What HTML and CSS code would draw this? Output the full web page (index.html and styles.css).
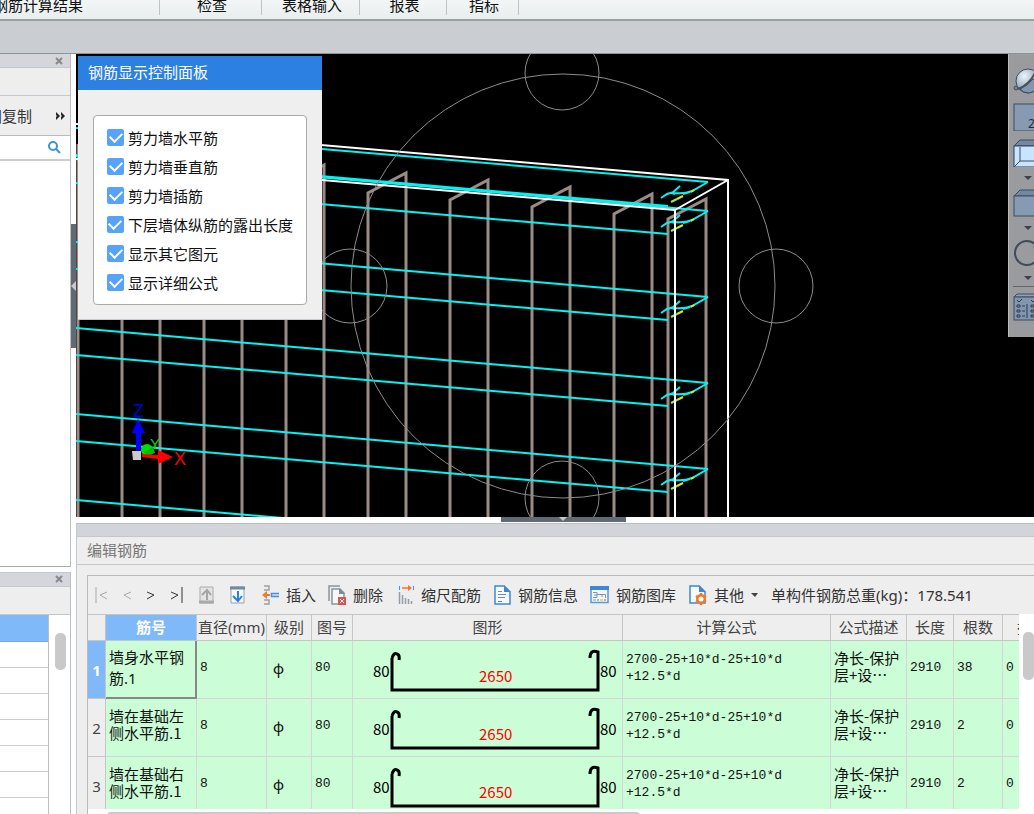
FILE: index.html
```html
<!DOCTYPE html>
<html lang="zh-CN">
<head>
    <meta charset="UTF-8">
    <meta name="viewport" content="width=device-width, initial-scale=1.0">
    <title>编辑钢筋</title>
    <link rel="stylesheet" href="styles.css">
</head>
<body>

<nav class="ribbon">
    <button class="tab tab-first">钢筋计算结果</button>
    <button class="tab tab-check">检查</button>
    <button class="tab tab-input">表格输入</button>
    <button class="tab tab-report">报表</button>
    <button class="tab tab-index">指标</button>
</nav>
<div class="strip"></div>

<main class="workspace">
    <aside class="sidebar">
        <section class="dock dock-top">
            <div class="dock-title"><button class="close" aria-label="关闭"><svg width="8" height="8"><path d="M1 1L7 7M7 1L1 7"/></svg></button></div>
            <div class="dock-blank"></div>
            <div class="dock-tools">
                <button class="copy">间复制</button>
                <button class="more" aria-label="更多"><svg width="10" height="8"><path d="M0 0L4 4L0 8V5L1 4L0 3ZM5 0L9 4L5 8V5L6 4L5 3Z"/></svg></button>
            </div>
            <div class="search">
                <input type="text" aria-label="搜索">
                <svg width="13" height="13" viewBox="0 0 13 13"><circle cx="5" cy="5" r="4"/><path d="M8 8L12 12"/></svg>
            </div>
            <div class="dock-body"></div>
        </section>
        <section class="dock dock-bottom">
            <div class="dock-title"><button class="close" aria-label="关闭"><svg width="8" height="8"><path d="M1 1L7 7M7 1L1 7"/></svg></button></div>
            <div class="dock-blank"></div>
            <div class="list-wrap">
                <div class="list">
                    <div class="item active"></div>
                    <div class="item"></div>
                    <div class="item"></div>
                    <div class="item"></div>
                    <div class="item"></div>
                    <div class="item"></div>
                    <div class="item"></div>
                    <div class="item"></div>
                </div>
                <div class="list-scroll"><div class="thumb"></div></div>
            </div>
        </section>
    </aside>

    <div class="splitter-v"><div class="handle"><svg width="5" height="10"><path d="M5 0L0 5L5 10Z"/></svg></div></div>

    <div class="content">
        <section class="viewport">
            <svg class="scene" viewBox="76 54 958 463" preserveAspectRatio="xMinYMin slice">
                <defs>
                    <g id="hook">
                        <path class="bar" d="M708 0L692 9Q685 12 674 11M683 12L690 10M680 4L672 11L675 12M661 16L667 12L674 10"/>
                        <path class="tip" d="M671 20L677 17"/>
                        <path class="dot" d="M677 17L683 14M691 10L694 8"/>
                    </g>
                </defs>
                <!-- vertical bars -->
                <g class="vertical">
                    <path d="M78 144V517M122 517V172L160 151V517M204 517V179L242 158V517M286 517V186L324 165V517"/>
                    <path d="M368 517V193L406 173V517M450 517V200L488 180V517M532 517V207L570 187V517M614 517V214L652 194V517M668 517V219L706 199V517"/>
                </g>
                <!-- horizontal bars -->
                <g class="bar">
                    <path d="M76 128L708 182M76 155L668 206"/>
                    <path d="M76 156L708 211M76 183L668 234"/>
                    <path d="M76 242L708 297M76 269L668 320"/>
                    <path d="M76 328L708 383M76 355L668 406"/>
                    <path d="M76 414L708 469M76 441L668 492"/>
                    <path d="M76 500L708 555"/>
                </g>
                <use href="#hook" y="182"/>
                <use href="#hook" y="211"/>
                <use href="#hook" y="297"/>
                <use href="#hook" y="383"/>
                <use href="#hook" y="469"/>
                <path class="wall" d="M76 124L728 180V517M76 159L675 210V517M675 210L728 180"/>
                <g class="orbit">
                    <circle cx="563" cy="286" r="212"/>
                    <circle cx="562" cy="73" r="37"/>
                    <circle cx="776" cy="286" r="37"/>
                    <circle cx="350" cy="286" r="37"/>
                    <circle cx="562" cy="498" r="37"/>
                </g>
                <!-- axes -->
                <circle cx="147" cy="450" r="6" fill="#0d0"/>
                <path d="M144 452L153 447L155 453L148 456Z" fill="#0b0"/>
                <path d="M136 452V433H132L138 419L145 433H141V452Z" fill="#00f"/>
                <path d="M142 454L158 455V450L173 457L158 464V459L142 457Z" fill="#f00"/>
                <path d="M132 451H141V460H133Z" fill="#ccc"/>
                <text class="axis" x="133" y="417" fill="#00d">Z</text>
                <text class="axis axis-y" x="150" y="449" fill="#0d0">Y</text>
                <text class="axis" x="174" y="465" fill="#f00">X</text>
            </svg>

            <form class="panel">
                <h2>钢筋显示控制面板</h2>
                <div class="options">
                    <label><input type="checkbox" checked>剪力墙水平筋</label>
                    <label><input type="checkbox" checked>剪力墙垂直筋</label>
                    <label><input type="checkbox" checked>剪力墙插筋</label>
                    <label><input type="checkbox" checked>下层墙体纵筋的露出长度</label>
                    <label><input type="checkbox" checked>显示其它图元</label>
                    <label><input type="checkbox" checked>显示详细公式</label>
                </div>
            </form>

            <div class="view-tools">
                <button aria-label="动态观察"><svg width="28" height="28" viewBox="0 0 28 28">
                    <defs><radialGradient id="ball" cx="0.35" cy="0.3" r="0.7"><stop offset="0" stop-color="#eef3f8"/><stop offset="1" stop-color="#7d92ac"/></radialGradient></defs>
                    <circle cx="15" cy="14" r="12" fill="url(#ball)" stroke="#3d4c5c"/>
                    <path d="M7 22Q16 18 20 12L27 14Q26 24 16 26Q10 26 7 22Z" fill="#8096b1" stroke="#3d4c5c"/>
                    <circle cx="3" cy="21" r="2" fill="#808489" stroke="#4b5158"/><path d="M5 22Q16 18 22 6" fill="none" stroke="#4b5158" stroke-width="2"/>
                </svg></button>
                <button aria-label="二维"><svg width="28" height="28" viewBox="0 0 28 28">
                    <rect x="1" y="1" width="30" height="27" fill="#869ab3" stroke="#3d4c5c"/>
                    <text x="15" y="25">2D</text>
                </svg></button>
                <button aria-label="视图"><svg width="28" height="28" viewBox="0 0 28 28">
                    <path d="M1 7L7 1H34V7Z" fill="#7488a2" stroke="#3d4c5c"/>
                    <rect x="1" y="7" width="32" height="21" fill="#c8e5ff" stroke="#2f4052"/>
                    <path d="M1 28L7 22H30M7 22V8" fill="none" stroke="#3d4c5c"/>
                </svg></button>
                <svg class="drop" width="8" height="6"><path d="M0 1H8L4 5Z"/></svg>
                <button aria-label="实体"><svg width="28" height="28" viewBox="0 0 28 28">
                    <path d="M1 7L7 1H34V7Z" fill="#7488a2" stroke="#3d4c5c"/>
                    <rect x="1" y="7" width="32" height="20" fill="#869ab3" stroke="#3d4c5c"/>
                </svg></button>
                <svg class="drop" width="8" height="6"><path d="M0 1H8L4 5Z"/></svg>
                <button aria-label="旋转"><svg width="28" height="28" viewBox="0 0 28 28">
                    <circle cx="14" cy="14" r="12" fill="none" stroke="#3f4a58" stroke-width="2"/>
                    <path d="M20 8L27 9V2Z" fill="#3f4a58"/>
                </svg></button>
                <svg class="drop" width="8" height="6"><path d="M0 1H8L4 5Z"/></svg>
                <button class="settings" aria-label="显示设置"><svg width="28" height="28" viewBox="0 0 28 28">
                    <path d="M1 4L4 1H32V4Z" fill="#8da1ba" stroke="#3d4c5c"/>
                    <rect x="1" y="4" width="31" height="23" fill="#8096b1" stroke="#3d4c5c"/>
                    <path d="M4 7L6 9L9 6M18 7L20 9L23 6M4 12H7V14H4ZM4 17H7V19H4ZM4 22H7V24H4ZM9 13H12M9 18H12M9 23H12M14 11V25M18 12H21V14H18ZM18 17H21V19H18ZM18 22H21V24H18Z" fill="none" stroke="#2f3c4a"/>
                </svg></button>
            </div>
        </section>

        <div class="splitter-h"><div class="handle"><svg width="8" height="4"><path d="M0 0H8L4 4Z"/></svg></div></div>

        <section class="editor">
            <div class="editor-grip"></div>
            <h1>编辑钢筋</h1>
            <div class="grid-box">
                <div class="toolbar">
                    <div class="pager">
                        <button class="off" aria-label="首行"><svg width="12" height="16"><path d="M1 0V16M12 5L5 8L12 12"/></svg></button>
                        <button class="off" aria-label="上一行"><svg width="8" height="16"><path d="M8 5L1 8L8 12"/></svg></button>
                        <button aria-label="下一行"><svg width="8" height="16"><path d="M0 5L7 8L0 12"/></svg></button>
                        <button aria-label="末行"><svg width="12" height="16"><path d="M0 5L7 8L0 12M11 0V16"/></svg></button>
                        <button aria-label="上移"><svg width="15" height="18"><path d="M1 1H14V17H1Z" fill="#e4e4e4" stroke="#aaa"/><path d="M0 16H15" stroke="#aaa" stroke-width="3"/><path d="M8 14V5M3 9L8 4L12 9" stroke="#a5a5a5" stroke-width="2"/></svg></button>
                        <button aria-label="下移"><svg width="15" height="18"><path d="M1 1H14V17H1Z" fill="#f4f8fc" stroke="#8fa3b8"/><path d="M0 2H15" stroke="#6f8aa5" stroke-width="3"/><path d="M8 5V14M3 10L8 15L12 10" stroke="#2f7fd8" stroke-width="2"/></svg></button>
                    </div>
                    <button class="tool">
                        <svg width="17" height="20"><path d="M2 1H7V5H2M2 19H7V15H2" stroke="#98a2ab" stroke-width="1.5"/><path d="M17 8.500H9.500V11.500H17" fill="#cfe2fa" stroke="#4a90e2" stroke-width="1.500"/><path d="M2 10H8" stroke="#f0792b" stroke-width="2"/><path d="M0 10L5 6V14Z" fill="#f0792b"/></svg>
                        插入
                    </button>
                    <button class="tool">
                        <svg width="18" height="20"><path d="M1 16V1H12" stroke="#8a949c" stroke-width="1.500"/><path d="M4 4H12L16 8V19H4Z" fill="#f8f8f8" stroke="#8a949c" stroke-width="1.500"/><path d="M11 3V9H17Z" fill="#7f8a92"/><rect x="10" y="12" width="8" height="8" fill="#dd5252"/><path d="M12 14L16 18M16 14L12 18" stroke="#fff"/></svg>
                        删除
                    </button>
                    <button class="tool">
                        <svg width="19" height="20"><path d="M4.500 1V5M18.500 1V5" stroke="#4a90e2"/><path d="M7 3H15" stroke="#f0792b" stroke-width="1.500"/><path d="M13 0L17 3L13 6Z" fill="#f0792b"/><path d="M4.500 7V19M7.500 10V19M10.500 13V19M13.500 14V19M16.500 16V19" stroke="#929da6" stroke-width="1.500"/></svg>
                        缩尺配筋
                    </button>
                    <button class="tool">
                        <svg width="18" height="20"><path d="M2 1H11L17 7V19H2Z" fill="#f5faff" stroke="#3f87d6" stroke-width="1.500"/><path d="M11 0V7H18Z" fill="#3f87d6"/><path d="M5 6.500H9M5 9.500H13M5 12.500H12" stroke="#7f8a92"/><path d="M5 16.500H9" stroke="#3f87d6"/></svg>
                        钢筋信息
                    </button>
                    <button class="tool">
                        <svg width="19" height="18"><path d="M1 1H18V16.500H1Z" fill="#f1f6fc" stroke="#5b98dc" stroke-width="1.500"/><path d="M0 2H19" stroke="#3f87d6" stroke-width="4"/><path d="M3 6.500H7V11.500H3M4 9H7M7 8.500H15.500V12M12 8.500V11" stroke="#8c959d"/><path d="M3 14H6" stroke="#8fc3f5" stroke-width="1.500"/><path d="M7 14H9" stroke="#7c7" stroke-width="1.500"/><path d="M10 14H13" stroke="#e8c45a" stroke-width="1.500"/><path d="M14 14H16" stroke="#e77" stroke-width="1.500"/></svg>
                        钢筋图库
                    </button>
                    <button class="tool">
                        <svg width="19" height="20"><path d="M2 1H11L17 7V18H2Z" fill="#f5faff" stroke="#3f87d6" stroke-width="1.500"/><path d="M11 0V7H18Z" fill="#3f87d6"/><circle cx="13" cy="14" r="5" fill="#f0792b"/><path d="M13 8V20M8 11L18 17M18 11L8 17" stroke="#f0792b" stroke-width="2.500"/><circle cx="13" cy="14" r="2.500" fill="#fff"/></svg>
                        其他
                        <svg class="caret" width="8" height="4"><path d="M0 0H7L4 4Z"/></svg>
                    </button>
                    <span class="total">单构件钢筋总重(kg)：178.541</span>
                </div>

                <div class="table-area">
                    <div class="table-clip">
                        <table>
                            <colgroup>
                                <col class="c-row"><col class="c-name"><col class="c-dia"><col class="c-grade"><col class="c-no"><col>
                                <col class="c-formula"><col class="c-desc"><col class="c-len"><col class="c-count"><col class="c-lap">
                            </colgroup>
                            <thead>
                                <tr>
                                    <th></th>
                                    <th class="active">筋号</th>
                                    <th>直径(mm)</th>
                                    <th>级别</th>
                                    <th>图号</th>
                                    <th>图形</th>
                                    <th>计算公式</th>
                                    <th>公式描述</th>
                                    <th>长度</th>
                                    <th>根数</th>
                                    <th class="cut">搭接</th>
                                </tr>
                            </thead>
                            <tbody>
                                <tr>
                                    <th class="active">1</th>
                                    <td class="editing">墙身水平钢筋.1</td>
                                    <td class="num">8</td>
                                    <td class="grade">ф</td>
                                    <td class="num">80</td>
                                    <td class="shape"><svg width="269" height="56"><path d="M39 16V48H245V10Q237 7 237 16M39 16Q41 10 44 12Q47 13 46 18"/><text x="20" y="35">80</text><text class="red" x="126" y="40">2650</text><text x="247" y="35">80</text></svg></td>
                                    <td class="num">2700-25+10*d-25+10*d +12.5*d</td>
                                    <td class="desc">净长-保护层+设⋯</td>
                                    <td class="num">2910</td>
                                    <td class="num">38</td>
                                    <td class="num">0</td>
                                </tr>
                                <tr>
                                    <th>2</th>
                                    <td class="name">墙在基础左侧水平筋.1</td>
                                    <td class="num">8</td>
                                    <td class="grade">ф</td>
                                    <td class="num">80</td>
                                    <td class="shape"><svg width="269" height="56"><path d="M39 16V48H245V10Q237 7 237 16M39 16Q41 10 44 12Q47 13 46 18"/><text x="20" y="35">80</text><text class="red" x="126" y="40">2650</text><text x="247" y="35">80</text></svg></td>
                                    <td class="num">2700-25+10*d-25+10*d +12.5*d</td>
                                    <td class="desc">净长-保护层+设⋯</td>
                                    <td class="num">2910</td>
                                    <td class="num">2</td>
                                    <td class="num">0</td>
                                </tr>
                                <tr>
                                    <th>3</th>
                                    <td class="name">墙在基础右侧水平筋.1</td>
                                    <td class="num">8</td>
                                    <td class="grade">ф</td>
                                    <td class="num">80</td>
                                    <td class="shape"><svg width="269" height="56"><path d="M39 16V48H245V10Q237 7 237 16M39 16Q41 10 44 12Q47 13 46 18"/><text x="20" y="35">80</text><text class="red" x="126" y="40">2650</text><text x="247" y="35">80</text></svg></td>
                                    <td class="num">2700-25+10*d-25+10*d +12.5*d</td>
                                    <td class="desc">净长-保护层+设⋯</td>
                                    <td class="num">2910</td>
                                    <td class="num">2</td>
                                    <td class="num">0</td>
                                </tr>
                            </tbody>
                        </table>
                    </div>
                    <div class="table-scroll"><div class="thumb"></div></div>
                </div>
                <div class="bottom-scroll"><div class="thumb"></div></div>
            </div>
        </section>
    </div>
</main>

</body>
</html>
```
FILE: styles.css
```css
* {
    box-sizing: border-box;
}

body {
    margin: 0;
    height: 100vh;
    display: flex;
    flex-direction: column;
    overflow: hidden;
    font-family: "Noto Sans", "Noto Sans CJK SC", sans-serif;
    font-size: 15px;
    color: #333;
    background: #fff;
}

button {
    padding: 0;
    border: none;
    background: none;
    font: inherit;
    color: inherit;
}

svg {
    display: block;
    flex: none;
}

/* top tabs */
.ribbon {
    flex: none;
    height: 21px;
    display: flex;
    align-items: flex-end;
    overflow: hidden;
    background: linear-gradient(#f2f6f6, #e8eded);
    border-bottom: 2px solid #9a9fa3;
    padding-bottom: 4px;
}

.tab {
    display: flex;
    justify-content: center;
    flex: none;
    height: 24px;
    padding-left: 3px;
    line-height: 28px;
    white-space: nowrap;
    color: #111;
    border-right: 1px solid #bfc3c6;
    width: 98px;
}

.tab-first {
    width: 160px;
    justify-content: flex-end;
    padding-right: 76px;
}

.tab-check {
    width: 102px;
}

.tab-report {
    width: 87px;
}

.tab-index {
    width: 72px;
}

.strip {
    flex: none;
    height: 33px;
    background: #cacdd1;
    border-bottom: 1px solid #8d949c;
}

.workspace {
    flex: 1;
    min-height: 0;
    display: grid;
    grid-template-columns: 71px 5px 1fr;
}

/* left docks */
.sidebar {
    display: flex;
    flex-direction: column;
    gap: 5px;
    min-height: 0;
}

.dock {
    display: flex;
    flex-direction: column;
    border-right: 1px solid #bbbfc4;
    min-height: 0;
}

.dock-top {
    flex: 513;
    border-bottom: 1px solid #aaa;
}

.dock-bottom {
    flex: 242;
    border-top: 1px solid #c3c8ce;
}

.dock-title {
    height: 14px;
    display: flex;
    justify-content: flex-end;
    align-items: center;
    padding-right: 7px;
    background: #d5d6db;
    border-bottom: 1px solid #c3c8ce;
    flex: none;
}

.close svg {
    stroke: #888;
    stroke-width: 2;
}

.dock-blank {
    flex: none;
    height: 28px;
    background: #eee;
    border-bottom: 1px solid #c3c8ce;
}

.dock-tools {
    flex: none;
    height: 40px;
    display: flex;
    align-items: center;
    justify-content: flex-end;
    gap: 24px;
    padding-right: 4px;
    overflow: hidden;
    background: #eee;
    border-bottom: 1px solid #bbb;
}

.copy {
    flex: none;
}

.more svg {
    fill: #222;
}

.search {
    flex: none;
    height: 25px;
    display: flex;
    align-items: center;
    padding-right: 9px;
    border-bottom: 2px solid #ccc;
}

.search input {
    flex: 1;
    min-width: 0;
    border: none;
    outline: none;
    font: inherit;
}

.search svg {
    fill: none;
    stroke: #3c95d0;
    stroke-width: 2;
}

.dock-body {
    flex: 1;
}

.list-wrap {
    flex: 1;
    min-height: 0;
    display: flex;
    overflow: hidden;
}

.list {
    flex: 1;
    border-right: 1px solid #bbb;
}

.item {
    height: 26px;
    border-bottom: 1px solid #ccc;
}

.item.active {
    height: 27px;
    background: #7fb9fa;
    border-color: #6fa8e8;
}

.list-scroll {
    width: 21px;
    padding: 18px 4px 0 6px;
}

.list-scroll .thumb {
    height: 37px;
    border-radius: 5px;
    background: #c9c9c9;
}

/* splitters */
.splitter-v {
    padding-top: 170px;
}

.splitter-v .handle {
    height: 124px;
    display: flex;
    align-items: center;
    background: #606a75;
}

.splitter-h {
    flex: none;
    height: 6px;
    padding-left: 16px;
}

.splitter-h .handle {
    width: 125px;
    height: 5px;
    margin: 0 auto;
    display: flex;
    justify-content: center;
    background: #606a75;
}

.handle svg {
    fill: #c5c8cc;
}

.content {
    display: flex;
    flex-direction: column;
    min-width: 0;
    min-height: 0;
}

/* 3D view */
.viewport {
    flex: 1;
    min-height: 0;
    position: relative;
    overflow: hidden;
    background: #000;
}

.scene {
    width: 100%;
    height: 100%;
    fill: none;
}

.bar {
    stroke: #00f4f4;
    stroke-width: 2;
}

.tip {
    stroke: #90f060;
    stroke-width: 2;
}

.dot {
    stroke: #dde810;
    stroke-width: 2;
}

.vertical {
    stroke: #9b8b85;
    stroke-width: 3;
}

.wall {
    stroke: #fff;
    stroke-width: 2;
}

.orbit {
    stroke: #8c8c8c;
    stroke-width: 1;
}

.axis {
    font: 18px "Liberation Sans", sans-serif;
}

.axis-y {
    font-size: 15px;
}

.panel {
    position: absolute;
    left: 2px;
    top: 2px;
    width: 244px;
    padding-bottom: 14px;
    background: #efefef;
    border-bottom: 1px solid #c8ccd2;
}

.panel h2 {
    margin: 0 0 26px;
    padding-left: 10px;
    line-height: 33px;
    font-size: 15px;
    font-weight: normal;
    color: #fff;
    background: #2b80e2;
    border-bottom: 1px solid #2b80e2;
    margin-bottom: 25px;
}

.options {
    margin: 0 15px;
    padding: 7px 13px;
    display: flex;
    flex-direction: column;
    background: #fff;
    border: 1px solid #aaa;
    border-radius: 4px;
}

.options label {
    height: 29px;
    display: flex;
    align-items: center;
    gap: 4px;
    line-height: 20px;
    color: #111;
    white-space: nowrap;
}

.options input {
    appearance: none;
    width: 17px;
    height: 17px;
    margin: 0;
    display: flex;
    justify-content: center;
    align-items: center;
    border-radius: 2px;
    background: #57a3fa;
}

.options input:checked::after {
    content: "";
    width: 10px;
    height: 6px;
    margin-bottom: 3px;
    border-left: 2px solid #fff;
    border-bottom: 2px solid #fff;
    transform: rotate(-45deg);
}

.view-tools {
    position: absolute;
    top: 0;
    right: 0;
    width: 26px;
    height: 283px;
    padding: 13px 0 0 4px;
    display: flex;
    flex-direction: column;
    gap: 8px;
    overflow: hidden;
    background: #999b9f;
    border-left: 1px solid #bbb;
}

.view-tools button {
    width: 28px;
}

.view-tools text {
    font: 12px "Noto Sans", sans-serif;
    fill: #1f2c3a;
}

.drop {
    margin-left: 11px;
    fill: #39434f;
}

.view-tools .settings {
    margin-top: -3px;
    padding-top: 6px;
    border-top: 1px solid #666;
}

/* bar editor */
.editor {
    flex: none;
    display: flex;
    flex-direction: column;
    background: #eee;
    border-left: 1px solid #c3c8ce;
}

.editor-grip {
    height: 14px;
    background: #d3d4d9;
    border-top: 1px solid #b9bec4;
    border-bottom: 1px solid #c3c8ce;
}

.editor h1 {
    margin: 0 0 10px;
    padding-left: 10px;
    line-height: 27px;
    font-size: 15px;
    font-weight: normal;
    color: #777;
    border-bottom: 1px solid #c3c8ce;
}

.grid-box {
    margin-left: 10px;
    border-left: 1px solid #bbb;
    border-top: 1px solid #bbb;
}

.toolbar {
    height: 38px;
    display: flex;
    align-items: center;
    gap: 12px;
    padding-left: 7px;
    padding-bottom: 1px;
    white-space: nowrap;
    overflow: hidden;
}

.toolbar svg {
    fill: none;
}

.pager {
    display: flex;
    align-items: center;
    gap: 16px;
    margin-right: 5px;
}

.pager svg {
    stroke: #333;
}

.pager .off svg {
    stroke: #aaa;
}

.tool {
    display: flex;
    align-items: center;
    gap: 7px;
}

.toolbar .caret {
    fill: #444;
}

.table-area {
    display: flex;
    height: 195px;
    background: #fff;
}

.table-clip {
    flex: 1;
    min-width: 0;
    overflow: hidden;
}

table {
    width: 100%;
    table-layout: fixed;
    border-collapse: separate;
    border-spacing: 0;
}

.c-row { width: 18px; }
.c-name { width: 91px; }
.c-dia { width: 70px; }
.c-grade { width: 45px; }
.c-no { width: 41px; }
.c-formula { width: 208px; }
.c-desc { width: 76px; }
.c-len { width: 47px; }
.c-count { width: 49px; }
.c-lap { width: 16px; }

th {
    padding: 0;
    font-weight: normal;
    line-height: 20px;
    white-space: nowrap;
    background: #eee;
    border-right: 1px solid #c5c5c5;
    border-bottom: 1px solid #c5c5c5;
    color: #444;
}

thead th {
    height: 27px;
    padding-bottom: 1px;
    border-top: 1px solid #c5c5c5;
}

th.active {
    color: #fff;
    font-weight: bold;
    background: #7fb9fa;
}

th.cut {
    overflow: hidden;
    border-right: none;
    padding-left: 14px;
    text-align: left;
}

td {
    height: 58px;
    padding: 0 0 4px 3px;
    overflow: hidden;
    background: #cbfed6;
    border-right: 1px solid #d5d5d5;
    border-bottom: 1px solid #d5d5d5;
    color: #111;
    line-height: 17px;
}

td:last-child {
    border-right: none;
}

.num {
    font-family: "Liberation Mono", monospace;
    font-size: 13px;
}

/* only the space may wrap */
td.num {
    padding-right: 40px;
    word-break: keep-all;
}

td.num:not(:nth-child(7)) {
    padding-right: 0;
}

.name,
.desc {
    font-family: "Noto Sans CJK SC", sans-serif;
}

td.name,
td.desc {
    padding-bottom: 7px;
}

.grade {
    padding-left: 6px;
    padding-bottom: 2px;
}

td.editing {
    padding-bottom: 2px;
    line-height: 21px;
    border-right: 2px solid #888;
    border-bottom: 2px solid #888;
}

td.shape {
    padding: 0;
}

.shape svg {
    margin: 0 auto;
}

.shape path {
    fill: none;
    stroke: #000;
    stroke-width: 3;
}

.shape text {
    font: 15px "Noto Sans CJK SC", sans-serif;
}

.shape .red {
    fill: #f00;
}

.table-scroll {
    width: 15px;
    padding: 18px 0 0 4px;
}

.table-scroll .thumb {
    height: 48px;
    border-radius: 5px;
    background: #c9c9c9;
}

.bottom-scroll {
    height: 5px;
    padding: 3px 393px 0 18px;
    overflow: hidden;
    background: #fff;
}

.bottom-scroll .thumb {
    height: 10px;
    border-radius: 5px;
    background: #c9c9c9;
}
```
